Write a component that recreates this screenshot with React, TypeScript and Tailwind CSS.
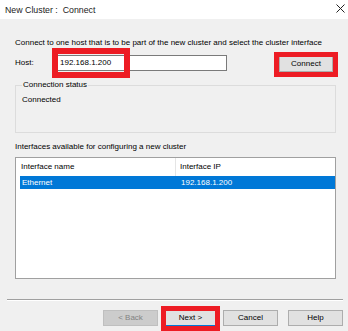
import React from "react";

const Btn = ({
  label,
  cls = "",
}: {
  label: string;
  cls?: string;
}) => (
  <div
    className={
      "flex h-[16px] w-[55px] items-center justify-center border " + cls
    }
  >
    {label}
  </div>
);

export default function App() {
  return (
    <div className="relative h-[331px] w-[348px] overflow-hidden whitespace-nowrap bg-[#f0f0f0] font-['Liberation_Sans',Arial,sans-serif] text-[8px] leading-[12px] text-black">
      {/* title bar */}
      <div className="flex h-[19px] items-center justify-between bg-white pl-[5px] pr-[3px]">
        <span className="whitespace-pre text-[8.8px] text-[#1a1a1a]">
          New Cluster :  Connect
        </span>
        <svg width="9" height="9" viewBox="0 0 9 9" className="mb-[3px]">
          <path d="M0.5 0.5 L8.5 8.5 M8.5 0.5 L0.5 8.5" stroke="#222" strokeWidth="1" />
        </svg>
      </div>

      <div className="pl-[15px] pr-[12px] pt-[18px]">
        <p className="h-[12px]">
          Connect to one host that is to be part of the new cluster and select the cluster interface
        </p>

        <div className="mt-[6px] flex h-[16px] items-center">
          <span className="w-[42px]">Host:</span>
          <div className="flex h-[16px] w-[170px] items-center border border-[#7a7a7a] bg-white pl-[2px]">
            192.168.1.200
          </div>
          <div className="ml-auto mr-[3px] mt-[2px] flex h-[16px] w-[54px] items-center justify-center border border-[#adadad] bg-[#e1e1e1]">
            Connect
          </div>
        </div>

        <fieldset className="mt-[8px] h-[54px] border border-[#dcdcdc] pl-[6px]">
          <legend className="px-[1px]">Connection status</legend>
          <div className="mt-[3px]">Connected</div>
        </fieldset>

        <p className="mt-[8px] h-[12px]">
          Interfaces available for configuring a new cluster
        </p>

        <div className="mt-[4px] h-[122px] border border-[#a0a0a0] bg-white pl-[4px]">
          <div className="flex h-[18px] items-center">
            <div className="flex h-full w-[156px] items-center border-r border-[#e5e5e5] pl-[1px]">
              Interface name
            </div>
            <div className="pl-[4px]">Interface IP</div>
          </div>
          <div className="flex h-[13px] items-center bg-[#0078d7] text-white">
            <div className="w-[156px] pl-[2px]">Ethernet</div>
            <div className="pl-[5px]">192.168.1.200</div>
          </div>
        </div>
      </div>

      <div className="pl-[7px] pr-[5px] pt-[20px]">
        <div className="h-[2px] border-t border-b border-t-[#a0a0a0] border-b-white" />
        <div className="mt-[9px] flex justify-end">
          <Btn label="< Back" cls="border-[#bfbfbf] bg-[#cccccc] text-[#838383]" />
          <Btn label="Next >" cls="ml-[5px] border-[#0078d7] bg-[#e1e1e1]" />
          <Btn label="Cancel" cls="ml-[5px] border-[#adadad] bg-[#e1e1e1]" />
          <Btn label="Help" cls="ml-[10px] border-[#adadad] bg-[#e1e1e1]" />
        </div>
      </div>

      {/* red annotation boxes */}
      <div className="absolute left-[52px] top-[48px] h-[30px] w-[78px] border-[6px] border-[#ed1c24]" />
      <div className="absolute left-[274px] top-[52px] h-[25px] w-[64px] border-[5px] border-[#ed1c24]" />
      <div className="absolute left-[161px] top-[306px] h-[25px] w-[59px] border-[5px] border-[#ed1c24]" />
    </div>
  );
}
